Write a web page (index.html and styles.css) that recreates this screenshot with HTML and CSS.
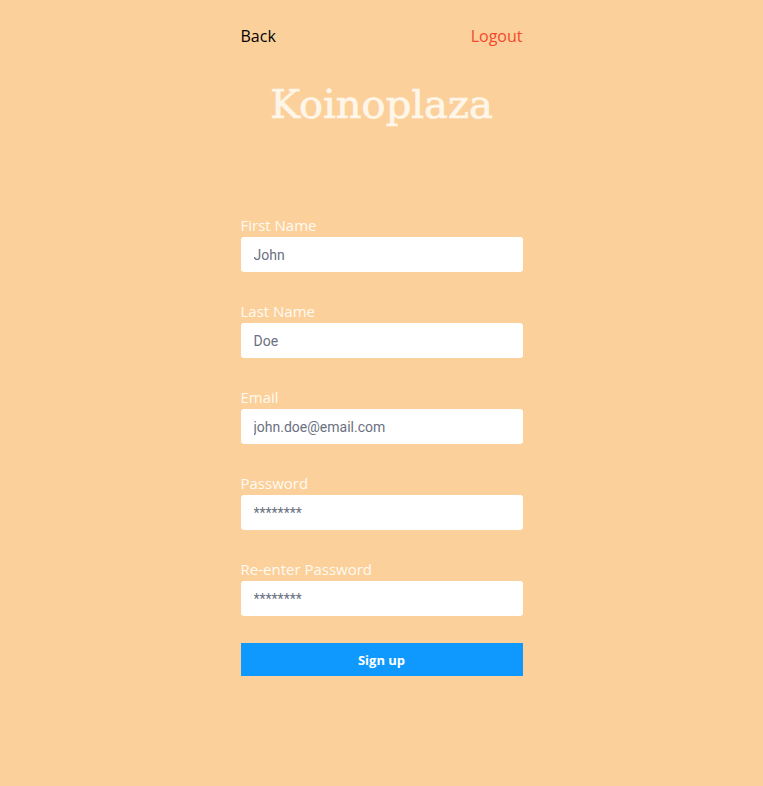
FILE: index.html
```html
<!DOCTYPE html>
<html>
<head>
<meta charset="utf-8">
<link rel="stylesheet" href="styles.css">
</head>
<body>
<div class="page">
  <div class="topbar">
    <a class="back">Back</a>
    <a class="logout">Logout</a>
  </div>
  <h1 class="title">Koinoplaza</h1>
  <form class="form">
    <div class="field">
      <label class="label">First Name</label>
      <input class="input" type="text" placeholder="John">
    </div>
    <div class="field">
      <label class="label">Last Name</label>
      <input class="input" type="text" placeholder="Doe">
    </div>
    <div class="field">
      <label class="label">Email</label>
      <input class="input" type="text" placeholder="john.doe@email.com">
    </div>
    <div class="field">
      <label class="label">Password</label>
      <input class="input" type="text" placeholder="********">
    </div>
    <div class="field">
      <label class="label">Re-enter Password</label>
      <input class="input" type="text" placeholder="********">
    </div>
    <button class="btn" type="button">Sign up</button>
  </form>
</div>
</body>
</html>
```
FILE: styles.css
```css
html, body {
  margin: 0;
  padding: 0;
  background: #fcd09a;
}
body {
  font-family: "Open Sans", "Noto Sans", sans-serif;
}
.page {
  width: 282px;
  margin: 0 auto;
  padding-top: 25px;
}
.topbar {
  display: flex;
  justify-content: space-between;
  font-size: 16px;
  line-height: 22px;
}
.back { color: #000; }
.logout { color: #f2492e; }
.title {
  margin: 32px 0 0;
  text-align: center;
  font-family: "DejaVu Serif", serif;
  font-weight: normal;
  font-size: 40px;
  line-height: 50px;
  color: #fff6ea;
  -webkit-text-stroke: 0.7px #fff6ea;
}
.form {
  margin-top: 87px;
  display: flex;
  flex-direction: column;
}
.field {
  display: flex;
  flex-direction: column;
  margin-bottom: 30px;
}
.label {
  color: #fffaf2;
  font-size: 15px;
  line-height: 21px;
  margin-top: -1px;
  margin-bottom: 1px;
}
.input {
  box-sizing: border-box;
  height: 35px;
  border: none;
  border-radius: 3px;
  background: #fff;
  padding: 0 13px;
  font-family: Roboto, sans-serif;
  font-size: 14px;
  color: #6b7080;
  outline: none;
}
.input::placeholder {
  color: #6b7080;
  opacity: 1;
}
.btn {
  margin-top: -3px;
  height: 33px;
  border: none;
  background: #0f99ff;
  color: #fff;
  font-family: "Open Sans", sans-serif;
  font-weight: bold;
  font-size: 13px;
}
```
